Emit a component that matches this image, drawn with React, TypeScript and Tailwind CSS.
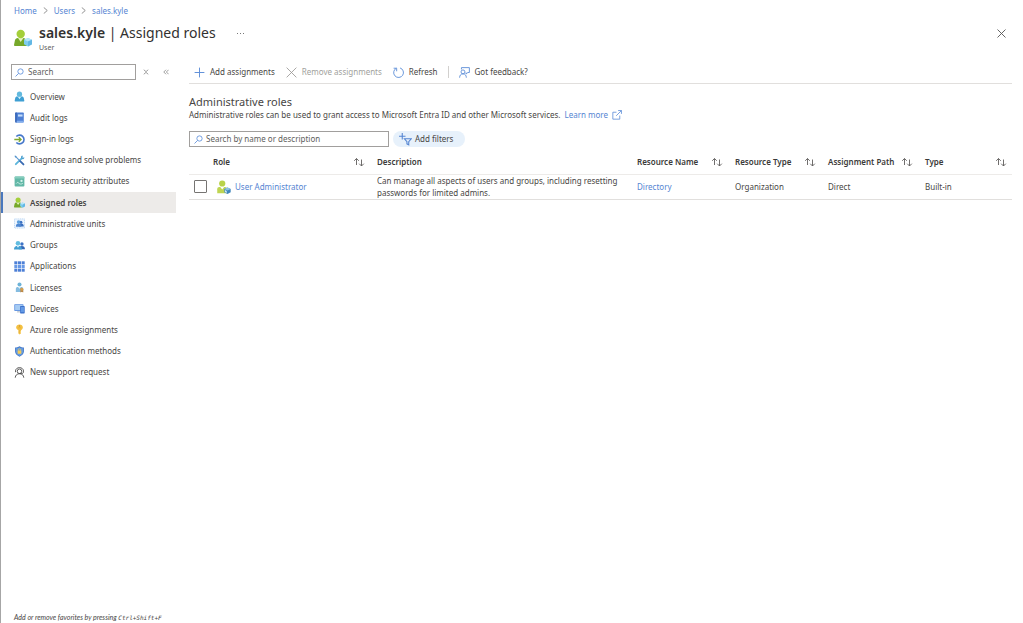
import type { ReactNode } from 'react';

type IconProps = { className?: string };

function Svg({ className = 'size-[11px]', box = 18, children }: { className?: string; box?: number; children: ReactNode }) {
  return (
    <svg viewBox={`0 0 ${box} ${box}`} className={`shrink-0 ${className}`} fill="none" aria-hidden="true">
      {children}
    </svg>
  );
}

function RoleUserIcon({ className }: IconProps) {
  return (
    <Svg className={className}>
      <path d="M.8 17c-.5 0-.9-.5-.8-1l.9-4.500C1.200 9.900 2.300 9 3.900 9h5.400c1.700 0 2.700 1 3 2.500l.9 4.500c.1.600-.3 1-.9 1z" fill="#76a82a" />
      <path d="M4 9l2.700 4L9.400 9z" fill="#e6f3c0" />
      <circle cx="6.700" cy="5" r="4.200" fill="#a4cf3a" />
      <path d="M14 9l4 1.700v4.600L14 17.600l-4-2.300v-4.600z" fill="#7fcdf0" />
      <path d="M14 9l4 1.700-4 1.900-4-1.900z" fill="#b5e6fa" />
      <path d="M14 12.600l4-1.900v4.600l-4 2.300z" fill="#62b7e4" />
    </Svg>
  );
}

function RowUserIcon({ className }: IconProps) {
  return (
    <Svg className={className}>
      <path d="M.3 17V12c0-1.900 1-3 2.700-3h7.200c1.800 0 2.800 1.100 2.800 3v5z" fill="#bfd552" />
      <path d="M4.200 9l2.500 3.200L9.200 9z" fill="#fff" />
      <circle cx="6.700" cy="4.500" r="4" fill="#b9d249" />
      <path d="M13.500 9.500l4.100 2v4.400l-4.100 2-4.100-2v-4.400z" fill="#3f86bd" />
      <path d="M13.500 9.500l4.100 2-4.100 2-4.100-2z" fill="#8fc3e4" />
      <path d="M10.200 13l2.300 1.200v2.400l-2.300-1.300z" fill="#d5ebf7" />
    </Svg>
  );
}

function OverviewIcon() {
  return (
    <Svg>
      <path d="M2 17c-.6 0-1-.6-.9-1.200l.8-4c.3-1.700 1.500-2.600 3.100-2.600h8c1.600 0 2.800.9 3.100 2.600l.8 4c.1.600-.3 1.200-.9 1.200z" fill="#3f9fd3" />
      <path d="M6 9.200l3 4.200 3-4.200z" fill="#d5f2fc" />
      <circle cx="9" cy="5.200" r="4.300" fill="#62b9de" />
    </Svg>
  );
}

function AuditIcon() {
  return (
    <Svg>
      <rect x="2" y="1" width="14" height="16" rx="1" fill="#4c7fd4" />
      <path d="M2 2a1 1 0 011-1h1.500v16H3a1 1 0 01-1-1z" fill="#3764b4" />
      <rect x="6.500" y="4" width="7.500" height="3.500" fill="#c3dcfa" />
      <path d="M4.500 14.500H16V16a1 1 0 01-1 1H4.500z" fill="#82aeee" />
    </Svg>
  );
}

function SignInIcon() {
  return (
    <Svg>
      <path d="M3.800 4.200A7.200 7.200 0 1 1 3.800 13.800" stroke="#4678cb" strokeWidth="2.600" />
      <path d="M.5 9H11M7.800 5.300L11.500 9l-3.700 3.700" stroke="#7fa82e" strokeWidth="2.200" />
    </Svg>
  );
}

function DiagnoseIcon() {
  return (
    <Svg>
      <path d="M3 15L13 5" stroke="#5bb5db" strokeWidth="3" strokeLinecap="round" />
      <path d="M12 1.800c1-.7 2-.7 3-.3L13.300 3.500l1.300 1.300 2-1.700c.5 1.300 0 2.600-1 3.300-1 .8-2.400.6-3.300-.2-.9-1-1.200-3-.3-4.400z" fill="#4ea0d0" />
      <path d="M2 2l8 8" stroke="#5f99d0" strokeWidth="1.800" />
      <path d="M10 10l5.500 5.500" stroke="#3a6bb2" strokeWidth="3" strokeLinecap="round" />
      <path d="M1.200 1l2.400.7.700 2-1 .8-2-1.200z" fill="#5394cc" />
    </Svg>
  );
}

function AttributesIcon() {
  return (
    <Svg>
      <rect x="1" y="1" width="16" height="16" rx="1.500" fill="#62b8a7" />
      <path d="M1 2.500A1.500 1.500 0 012.500 1h13A1.500 1.500 0 0117 2.500V4H1z" fill="#86cdbd" />
      <circle cx="12.300" cy="8" r="1.900" fill="#d6f4ed" />
      <path d="M3.500 12.500c2-3 4-2 5 0 1.500 1 4 1 6-.5" stroke="#d1f0e9" strokeWidth="1.400" />
    </Svg>
  );
}

function UnitsIcon() {
  return (
    <Svg>
      <rect x=".8" y="1.500" width="16.400" height="15" stroke="#9cc3ee" strokeWidth="1" strokeDasharray="2 1" fill="#edf5fe" />
      <circle cx="11.300" cy="6.800" r="2.500" fill="#3b70c0" />
      <path d="M8 14c0-3.500 1.400-5 4-5s4 1.500 4 5z" fill="#3b70c0" />
      <circle cx="7.500" cy="6.500" r="2.900" fill="#5c9fdd" />
      <path d="M3 14.200c0-3.600 1.600-5 4.500-5s4.500 1.400 4.500 5z" fill="#4c87d2" />
    </Svg>
  );
}

function GroupsIcon() {
  return (
    <Svg>
      <circle cx="13" cy="6.500" r="2.800" fill="#3c73c6" />
      <path d="M8 15c0-3.700 1.800-5.300 5-5.300 3 0 4.800 1.600 4.900 5.300z" fill="#3266b6" />
      <circle cx="6.500" cy="5.500" r="3.700" fill="#62bce0" />
      <path d="M0 15.500c0-4.300 2.200-6.100 6.500-6.100s6.500 1.800 6.500 6.100z" fill="#429fd2" />
      <path d="M4.200 9.600l2.300 2.900 2.300-2.900z" fill="#d9f4fc" />
    </Svg>
  );
}

function AppsIcon() {
  return (
    <Svg>
      {[0.5, 6.5, 12.5].map((y, r) =>
        [0.5, 6.5, 12.5].map((x) => (
          <rect key={`${x}-${y}`} x={x} y={y} width="5" height="5" fill={r === 1 ? '#6698e6' : '#4c7fd6'} />
        )),
      )}
    </Svg>
  );
}

function LicensesIcon() {
  return (
    <Svg>
      <circle cx="9" cy="4" r="3.300" fill="#6db3d8" />
      <path d="M3 16.500v-5c0-2.400 1.200-3.400 3.300-3.400h5.500c2 0 3.200 1 3.200 3.400v5z" fill="#85bce0" />
      <path d="M6.500 8.100L9 11l2.500-2.900z" fill="#e3f5fd" />
      <path d="M10.500 10.500h4.600v6.800l-2.300-1.500-2.300 1.500z" fill="#bd8542" />
      <circle cx="12.800" cy="12" r="2.400" fill="#d39f50" />
    </Svg>
  );
}

function DevicesIcon() {
  return (
    <Svg>
      <rect x=".5" y="2" width="15" height="11" rx="1" fill="#5b8fdf" />
      <rect x="1.800" y="3.300" width="12.400" height="8.400" fill="#a5cbf3" />
      <path d="M5.500 13h4l.7 2.500H4.700z" fill="#c3cbd4" />
      <rect x="10" y="5" width="7.500" height="12" rx="1" fill="#3b70ca" />
      <rect x="11.200" y="6.500" width="5.100" height="8.500" fill="#6299e6" />
    </Svg>
  );
}

function KeyIcon() {
  return (
    <Svg>
      <path d="M9 .8c3 0 5.500 1.900 5.500 4.800 0 2-1.300 3.500-2.900 4.200v1.100l-1 1 1 1.100-1 1 1 1L9 17.300l-1.800-1.600V9.800c-2-.8-3.700-2.200-3.700-4.200C3.500 2.700 6 .8 9 .8z" fill="#f4c142" />
      <path d="M6.500 6.200h5M8.700 10v5" stroke="#e0a83c" strokeWidth="1" />
      <circle cx="9" cy="3.200" r="1.100" fill="#c8922f" />
    </Svg>
  );
}

function ShieldIcon() {
  return (
    <Svg>
      <path d="M9 .6c2 1.600 4.400 2 7.200 2V9c0 4.400-4 6.900-7.200 8.500C5.800 15.900 1.800 13.400 1.800 9V2.600c2.800 0 5.200-.4 7.200-2z" fill="#3d73c5" />
      <path d="M9 2.100c1.800 1.200 3.800 1.600 6 1.700V9c0 3.600-3.200 5.700-6 7.200C6.200 14.700 3 12.600 3 9V3.800c2.200-.1 4.200-.5 6-1.700z" fill="#659be0" />
      <path d="M7 8V6.500a2 2 0 014 0V8" stroke="#e5c05a" strokeWidth="1.300" />
      <rect x="6" y="7.500" width="6" height="5.300" rx=".7" fill="#f3cb57" />
    </Svg>
  );
}

function SupportIcon() {
  return (
    <Svg>
      <g stroke="#444" strokeWidth="1.400">
        <circle cx="9" cy="7" r="3.700" />
        <path d="M2 17.500c.3-4 3-6.500 7-6.500s6.700 2.500 7 6.500" />
        <path d="M2.500 8.500V6.500C2.500 3.300 5.500 1 9 1s6.500 2.300 6.500 5.500V8c0 1.500-1 2.700-3 2.700H9" />
      </g>
    </Svg>
  );
}

function SearchIcon() {
  return (
    <Svg className="size-[9px]">
      <circle cx="11" cy="7" r="5.300" stroke="#6795dc" strokeWidth="1.800" />
      <path d="M7.200 10.800L1 17" stroke="#6795dc" strokeWidth="1.800" />
    </Svg>
  );
}

function SortIcon() {
  return (
    <svg viewBox="0 0 12 10" className="h-[10px] w-3 shrink-0" fill="none" stroke="#605e5c" strokeWidth=".9" aria-hidden="true">
      <path d="M3.500 8V1.500M1.200 3.800L3.500 1.500l2.300 2.300M8.500 2.500V9M6.200 6.700L8.500 9l2.300-2.300" />
    </svg>
  );
}

const navItems: { label: string; icon: ReactNode; active?: boolean }[] = [
  { label: 'Overview', icon: <OverviewIcon /> },
  { label: 'Audit logs', icon: <AuditIcon /> },
  { label: 'Sign-in logs', icon: <SignInIcon /> },
  { label: 'Diagnose and solve problems', icon: <DiagnoseIcon /> },
  { label: 'Custom security attributes', icon: <AttributesIcon /> },
  { label: 'Assigned roles', icon: <RoleUserIcon />, active: true },
  { label: 'Administrative units', icon: <UnitsIcon /> },
  { label: 'Groups', icon: <GroupsIcon /> },
  { label: 'Applications', icon: <AppsIcon /> },
  { label: 'Licenses', icon: <LicensesIcon /> },
  { label: 'Devices', icon: <DevicesIcon /> },
  { label: 'Azure role assignments', icon: <KeyIcon /> },
  { label: 'Authentication methods', icon: <ShieldIcon /> },
  { label: 'New support request', icon: <SupportIcon /> },
];

function Chevron() {
  return (
    <Svg className="size-[7px]" box={8}>
      <path d="M2 .5L6 4 2 7.500" stroke="#777" strokeWidth=".9" />
    </Svg>
  );
}

function HeaderCell({ label, sortable = true, last = false }: { label: string; sortable?: boolean; last?: boolean }) {
  return (
    <th scope="col" className="p-0 text-left font-semibold text-[#3b3a39]">
      {sortable ? (
        <button type="button" className={`flex w-full items-center justify-between ${last ? 'pr-[5px]' : 'pr-3'}`}>
          <span className="whitespace-nowrap">{label}</span>
          <SortIcon />
        </button>
      ) : (
        label
      )}
    </th>
  );
}

function Sidebar() {
  return (
    <aside className="flex w-[175px] shrink-0 flex-col">
      <div className="flex items-center pl-[10px]">
        <label className="flex h-4 w-[125px] items-center gap-1 border border-[#a19f9d] px-[3px]">
          <SearchIcon />
          <input type="search" aria-label="Search menu" placeholder="Search" className="w-full min-w-0 outline-none placeholder:text-[#605e5c]" />
        </label>
        <button type="button" aria-label="Expand groups" className="ml-[7px] flex">
          <Svg className="size-[6px]" box={8}>
            <path d="M1 1l3 2.500L7 1M1 7l3-2.500L7 7" stroke="#888" strokeWidth="1.100" />
          </Svg>
        </button>
        <button type="button" aria-label="Collapse menu" className="ml-[14px] flex">
          <Svg className="size-[6px]" box={8}>
            <path d="M4 1L1 4l3 3M7.500 1l-3 3 3 3" stroke="#888" strokeWidth="1.100" />
          </Svg>
        </button>
      </div>
      <nav className="mt-[6px] grid h-[297px] auto-rows-fr">
        {navItems.map((item) => (
          <a
            key={item.label}
            href="#"
            aria-current={item.active ? 'page' : undefined}
            className={`flex items-center gap-[5px] border-l-2 ${
              item.active ? 'border-[#4a78bd] bg-[#edebe9] font-semibold' : 'border-transparent'
            } pl-[11px]`}
          >
            {item.icon}
            <span>{item.label}</span>
          </a>
        ))}
      </nav>
      <p className="mt-auto pl-[13px] font-['Lato','Noto_Sans',sans-serif] text-[7px] leading-[11px] whitespace-nowrap italic">
        Add or remove favorites by pressing <kbd className="font-['DejaVu_Sans_Mono',monospace] text-[6px]">Ctrl+Shift+F</kbd>
      </p>
    </aside>
  );
}

function Toolbar() {
  return (
    <div className="flex h-[23px] items-center border-b border-[#e1dfdd] pl-[5px]">
      <button type="button" className="flex items-center gap-[5px]">
        <Svg className="size-[11px]">
          <path d="M9 1v16M1 9h16" stroke="#5f8fd8" strokeWidth="1.600" />
        </Svg>
        Add assignments
      </button>
      <button type="button" disabled className="ml-[11px] flex items-center gap-[5px] text-[#a19f9d]">
        <Svg className="size-[11px]">
          <path d="M1 1l16 16M17 1L1 17" stroke="#9a9896" strokeWidth="1.400" />
        </Svg>
        Remove assignments
      </button>
      <button type="button" className="ml-[11px] flex items-center gap-[5px]">
        <Svg className="size-[11px]">
          <path d="M11.500 1.500a8 8 0 11-6 .5M1 2h5v5" stroke="#5f8fd8" strokeWidth="1.500" />
        </Svg>
        Refresh
      </button>
      <span className="mx-[10px] h-3 w-px bg-[#d2d0ce]" />
      <button type="button" className="flex items-center gap-[5px]">
        <Svg className="size-[11px]">
          <g stroke="#5f8fd8" strokeWidth="1.500">
            <circle cx="6.500" cy="8" r="3.200" />
            <path d="M1 17.500c0-3.900 2.100-6.300 5.500-6.300s5.500 2.400 5.500 6.300M4 4V1h13v8h-2.500l-3 2.500V9" />
          </g>
        </Svg>
        Got feedback?
      </button>
    </div>
  );
}

export default function App() {
  return (
    <div className="flex min-h-screen flex-col border-l border-[#a6a6a6] bg-white font-['Noto_Sans','Open_Sans',sans-serif] text-[8px] leading-3 text-[#484644]">
      <header className="flex flex-col pl-[13px]">
        <nav aria-label="Breadcrumb" className="flex h-[21px] items-center gap-[5px] text-[#5585d2]">
          <a href="#">Home</a>
          <Chevron />
          <a href="#">Users</a>
          <Chevron />
          <a href="#">sales.kyle</a>
        </nav>
        <div className="flex items-start pr-[17px]">
          <RoleUserIcon className="mt-2 size-[18px]" />
          <div className="ml-[7px]">
            <h1 className="text-[14px] leading-[23px] text-[#323130]">
              <span className="font-semibold">sales.kyle</span> | Assigned roles
            </h1>
            <p className="text-[7px] leading-2 text-[#605e5c]">User</p>
          </div>
          <button type="button" aria-label="More actions" className="mt-2 ml-5 flex">
            <Svg className="size-[9px]" box={9}>
              <path d="M1 4.500h1M4 4.500h1M7 4.500h1" stroke="#777" />
            </Svg>
          </button>
          <button type="button" aria-label="Close" className="mt-2 ml-auto flex">
            <Svg className="size-[9px]" box={9}>
              <path d="M.5.500l8 8M8.500.500l-8 8" stroke="#555" strokeWidth=".9" />
            </Svg>
          </button>
        </div>
      </header>
      <div className="flex grow">
        <div className="flex pt-3">
          <Sidebar />
        </div>
        <main className="min-w-0 grow pt-[9px] pr-[11px] pl-[13px]">
          <Toolbar />
          <h2 className="mt-[11px] text-[11px] leading-[14px]">Administrative roles</h2>
          <p className="flex items-center">
            Administrative roles can be used to grant access to Microsoft Entra ID and other Microsoft services.
            <a href="#" className="ml-1 flex items-center gap-1 text-[#5585d2]">
              Learn more
              <Svg className="size-[10px]">
                <path d="M8 4H1.500v12.500H14V10M11 1h6v6M17 1L7.500 10.500" stroke="#5f8fd8" strokeWidth="1.500" />
              </Svg>
            </a>
          </p>
          <div className="mt-[10px] flex items-center gap-1">
            <label className="flex h-4 w-[200px] items-center gap-[3px] border border-[#a19f9d] px-1">
              <SearchIcon />
              <input type="search" aria-label="Search roles" placeholder="Search by name or description" className="w-full min-w-0 outline-none placeholder:text-[#605e5c]" />
            </label>
            <button type="button" className="flex h-4 items-center gap-[3px] rounded-full bg-[#e7f1fb] px-[6px] pr-3">
              <Svg className="size-[13px]">
                <path d="M4.500 0v9M0 4.500h9M7.500 8h9.500l-3.500 4v4.500l-2.500-1.500v-3z" stroke="#5585d2" strokeWidth="1.500" />
              </Svg>
              Add filters
            </button>
          </div>
          <table className="mt-1 w-full table-fixed border-collapse">
            <colgroup>
              <col className="w-6" />
              <col className="w-[164px]" />
              <col />
              <col className="w-[98px]" />
              <col className="w-[93px]" />
              <col className="w-[97px]" />
              <col className="w-[87px]" />
            </colgroup>
            <thead>
              <tr className="h-[23px] border-b border-[#edebe9]">
                <td className="p-0" />
                <HeaderCell label="Role" />
                <HeaderCell label="Description" sortable={false} />
                <HeaderCell label="Resource Name" />
                <HeaderCell label="Resource Type" />
                <HeaderCell label="Assignment Path" />
                <HeaderCell label="Type" last />
              </tr>
            </thead>
            <tbody>
              <tr className="h-[25px] border-b border-[#e1dfdd]">
                <td className="p-0 pl-[5px]">
                  <input type="checkbox" aria-label="Select User Administrator" className="block size-[13px] appearance-none rounded-[1px] border border-[#767472] checked:bg-[#4479cc]" />
                </td>
                <td className="p-0">
                  <a href="#" className="flex items-center gap-1 pl-1 text-[#5585d2]">
                    <RowUserIcon className="size-[14px]" />
                    User Administrator
                  </a>
                </td>
                <td className="p-0 pr-3">Can manage all aspects of users and groups, including resetting passwords for limited admins.</td>
                <td className="p-0">
                  <a href="#" className="text-[#5585d2]">Directory</a>
                </td>
                <td className="p-0">Organization</td>
                <td className="p-0">Direct</td>
                <td className="p-0">Built-in</td>
              </tr>
            </tbody>
          </table>
        </main>
      </div>
    </div>
  );
}
